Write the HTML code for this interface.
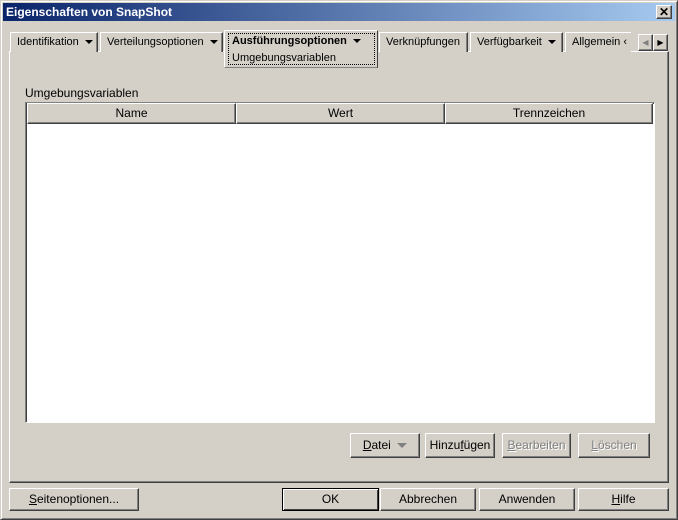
<!DOCTYPE html><html><head><style>
*{margin:0;padding:0;box-sizing:border-box}
body{width:678px;height:520px;background:#d4d0c8;font-family:"Liberation Sans",sans-serif;font-size:12px;color:#000;position:relative;overflow:hidden}
.a{position:absolute}
.win{left:0;top:0;width:678px;height:520px;border:1px solid;border-color:#d4d0c8 #404040 #404040 #d4d0c8;box-shadow:inset 1px 1px #fff,inset -1px -1px #808080}
.title{left:3px;top:3px;width:672px;height:18px;background:linear-gradient(90deg,#0a246a,#a6caf0);color:#fff;font-weight:bold;font-size:12px;line-height:18px;padding-left:3px}
.btn{position:absolute;border:1px solid;border-color:#fff #404040 #404040 #fff;box-shadow:inset -1px -1px #808080;text-align:center;line-height:20px;font-size:12px}
.tab{position:absolute;top:32px;height:20px;border:1px solid;border-bottom:none;border-color:#fff #404040 #fff #fff;box-shadow:inset -1px 0 #808080;line-height:18px;padding-left:6px;font-size:11px;background:#d4d0c8}
.tri{display:inline-block;width:0;height:0;border-left:4px solid transparent;border-right:4px solid transparent;border-top:4px solid #000;vertical-align:middle;margin-left:6px}
.hd{position:absolute;top:0;height:21px;border:1px solid;border-color:#fff #404040 #404040 #fff;box-shadow:inset -1px -1px #808080;text-align:center;line-height:19px;background:#d4d0c8}
.dis{color:#808080;text-shadow:1px 1px #fff}
u{text-decoration:underline}
</style></head><body>
<div class="a win"></div>
<div class="a title">Eigenschaften von SnapShot</div>
<div class="btn" style="left:656px;top:5px;width:16px;height:14px;line-height:12px;font-weight:bold;font-size:12px;background:#d4d0c8">✕</div>
<div class="a" style="left:9px;top:51px;width:660px;height:432px;border:1px solid;border-color:#fff #404040 #404040 #fff;box-shadow:inset -1px -1px #808080"></div>
<div class="tab" style="left:10px;width:88px">Identifikation<span class="tri"></span></div>
<div class="tab" style="left:100px;width:123px">Verteilungsoptionen<span class="tri"></span></div>
<div class="tab" style="left:379px;width:89px">Verknüpfungen</div>
<div class="tab" style="left:470px;width:93px">Verfügbarkeit<span class="tri"></span></div>
<div class="tab" style="left:565px;width:66px;border-right:none;box-shadow:none">Allgemein ‹</div>
<div class="a" style="left:224px;top:30px;width:154px;height:38px;background:#d4d0c8;border:1px solid;border-color:#fff #404040 #808080 #fff"></div>
<div class="a" style="left:228px;top:33px;width:147px;height:32px;border:1px dotted #000"></div>
<div class="a" style="left:232px;top:35px;font-weight:bold;font-size:11px">Ausführungsoptionen<span class="tri"></span></div>
<div class="a" style="left:232px;top:52px;font-size:11px">Umgebungsvariablen</div>
<div class="btn" style="left:638px;top:34px;width:15px;height:17px;line-height:15px;font-size:8px;color:#808080">◀</div>
<div class="btn" style="left:653px;top:34px;width:15px;height:17px;line-height:15px;font-size:8px">▶</div>
<div class="a" style="left:25px;top:86px">Umgebungsvariablen</div>
<div class="a" style="left:25px;top:102px;width:630px;height:321px;background:#fff;border:1px solid;border-color:#808080 #fff #fff #808080;box-shadow:inset 1px 1px #404040">
<div class="hd" style="left:1px;width:209px">Name</div>
<div class="hd" style="left:210px;width:209px">Wert</div>
<div class="hd" style="left:419px;width:208px">Trennzeichen</div>
</div>
<div class="btn" style="left:350px;top:433px;width:70px;height:25px;line-height:23px"><u>D</u>atei <span class="tri" style="border-top-color:#808080;border-width:5px 5px 0;margin-left:3px"></span></div>
<div class="btn" style="left:425px;top:433px;width:70px;height:25px;line-height:23px">Hinzu<u>f</u>ügen</div>
<div class="btn dis" style="left:502px;top:433px;width:69px;height:25px;line-height:23px"><u>B</u>earbeiten</div>
<div class="btn dis" style="left:578px;top:433px;width:72px;height:25px;line-height:23px"><u>L</u>öschen</div>
<div class="btn" style="left:9px;top:488px;width:130px;height:23px"><u>S</u>eitenoptionen...</div>
<div class="btn" style="left:282px;top:488px;width:97px;height:23px;border:1px solid #000;box-shadow:inset 1px 1px #fff,inset -1px -1px #404040">OK</div>
<div class="btn" style="left:380px;top:488px;width:96px;height:23px">Abbrechen</div>
<div class="btn" style="left:479px;top:488px;width:96px;height:23px">Anwenden</div>
<div class="btn" style="left:578px;top:488px;width:91px;height:23px"><u>H</u>ilfe</div>
</body></html>
